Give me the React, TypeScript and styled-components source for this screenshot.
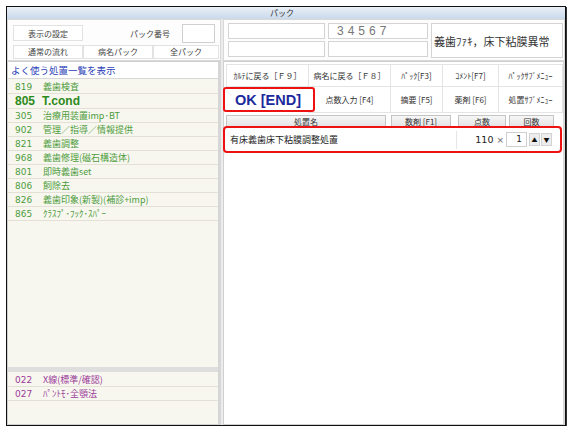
import React from "react";
import styled, { createGlobalStyle } from "styled-components";

const Global = createGlobalStyle`
  html, body { margin: 0; padding: 0; background: #ffffff; }
  body { font-family: "Noto Sans CJK JP", "Noto Sans", sans-serif; }
  * { box-sizing: border-box; }
`;

const Window = styled.div`
  margin: 6px 0 0 6px;
  width: 560px;
  height: 420px;
  border: 1px solid #111;
  box-shadow: 1px 1px 0 #333;
  background: #ececec;
  display: flex;
  flex-direction: column;
`;

const TitleBar = styled.div`
  height: 12px;
  background: linear-gradient(#e9eff7, #c9d9eb);
  font-size: 8px;
  line-height: 12px;
  color: #333;
  text-align: center;
  padding-right: 8px;
`;

const Row = styled.div<{ $h: number }>`
  display: flex;
  gap: 2px;
  height: ${(p) => p.$h}px;
`;

const Main = styled.div`
  flex: 1;
  display: flex;
  gap: 2px;
  min-height: 0;
`;

const LeftTop = styled.div`
  width: 214px;
  background: #fdfdfd;
  border: 1px solid #d8d8d8;
  padding: 3px 0 0 5px;
  display: flex;
  flex-direction: column;
  gap: 1px;
`;

const TopLine = styled.div<{ $h: number }>`
  display: flex;
  align-items: center;
  height: ${(p) => p.$h}px;
`;

const FlatButton = styled.div<{ $w: number; $h: number }>`
  width: ${(p) => p.$w}px;
  height: ${(p) => p.$h}px;
  background: #fff;
  border: 1px solid #e2e2e2;
  font-size: 8px;
  color: #444;
  display: flex;
  align-items: center;
  justify-content: center;
  white-space: nowrap;
`;

const Label = styled.span`
  font-size: 8px;
  color: #444;
  margin-left: 47px;
`;

const SmallInput = styled.div`
  width: 33px;
  height: 19px;
  margin-left: 12px;
  background: #fff;
  border: 1px solid #d0d0d0;
`;

const RightTop = styled.div`
  flex: 1;
  background: #fdfdfd;
  border: 1px solid #d8d8d8;
  padding: 3px 1px 2px 4px;
  display: flex;
  gap: 3px;
`;

const InputGrid = styled.div`
  display: grid;
  grid-template-columns: 97px 100px;
  grid-template-rows: 16px 16px;
  gap: 2px 3px;
`;

const Field = styled.div`
  background: #fff;
  border: 1px solid #d4d4d4;
  font-size: 12px;
  line-height: 14px;
  color: #777;
  padding-left: 8px;
  letter-spacing: 4px;
  font-family: "Liberation Sans", sans-serif;
`;

const Diagnosis = styled.div`
  flex: 1;
  background: #fff;
  border: 1px solid #d4d4d4;
  font-size: 11px;
  color: #333;
  display: flex;
  align-items: center;
  padding-left: 2px;
  white-space: nowrap;
`;

const LeftList = styled.div`
  width: 214px;
  display: flex;
  flex-direction: column;
  border: 1px solid #cfcfcf;
  border-right: 3px solid #d6d6d6;
  background: #f8f7ef;
`;

const ListHeader = styled.div`
  height: 17px;
  background: #fff;
  border-bottom: 1px solid #d8d8d8;
  color: #2c3fb8;
  font-size: 9.5px;
  line-height: 16px;
  padding-left: 3px;
`;

const ListArea = styled.div<{ $h?: number }>`
  ${(p) => (p.$h ? `height: ${p.$h}px;` : "flex: 1;")}
  padding-top: 1px;
  background: #f8f7ef;
`;

const Separator = styled.div`
  height: 5px;
  background: #dedede;
`;

const Item = styled.div<{ $color: string; $big?: boolean }>`
  display: flex;
  align-items: center;
  height: ${(p) => (p.$big ? 15 : 14)}px;
  border-bottom: 1px solid #e3e1d6;
  padding-left: 7px;
  color: ${(p) => p.$color};
  font-size: ${(p) => (p.$big ? 12 : 9)}px;
  font-weight: ${(p) => (p.$big ? 700 : 400)};
  white-space: nowrap;
`;

const Num = styled.span<{ $w: number; $big?: boolean }>`
  width: ${(p) => p.$w}px;
  font-family: ${(p) => (p.$big ? '"Liberation Sans"' : '"DejaVu Sans"')}, sans-serif;
  flex-shrink: 0;
`;

const BigName = styled.span`
  font-family: "Liberation Sans", sans-serif;
`;

const RightMain = styled.div`
  flex: 1;
  background: #fff;
  border: 1px solid #cfcfcf;
  border-right: 2px solid #d8d8d8;
  padding: 2px 0 0 2px;
  display: flex;
  flex-direction: column;
`;

const ButtonGrid = styled.div`
  display: grid;
  grid-template-columns: 82px 82px 52px 56px 64px;
  grid-template-rows: 22px 26px;
`;

const FKey = styled.div`
  border: 1px solid #e4e4e4;
  margin: 0 -1px -1px 0;
  background: #fff;
  font-size: 8px;
  color: #333;
  display: flex;
  align-items: center;
  justify-content: center;
  white-space: nowrap;
  overflow: hidden;
`;

const OkKey = styled.div`
  position: relative;
  z-index: 1;
  margin: 1px -7px 0 -3px;
  border: 2.5px solid #ee1111;
  border-radius: 3px;
  background: #fff;
  color: #1b2a9c;
  font-size: 14.5px;
  font-weight: 700;
  font-family: "Liberation Sans", sans-serif;
  display: flex;
  align-items: center;
  justify-content: center;
  white-space: nowrap;
  padding-right: 2px;
`;

const HeaderRow = styled.div`
  display: flex;
  margin-top: 3px;
  height: 12px;
  overflow: hidden;
`;

const ColHead = styled.div<{ $w: number; $ml: number }>`
  width: ${(p) => p.$w}px;
  margin-left: ${(p) => p.$ml}px;
  background: linear-gradient(#f7f7f7, #e2e2e2);
  border: 1px solid #c4c4c4;
  border-bottom: none;
  font-size: 8px;
  line-height: 11px;
  color: #333;
  text-align: center;
  white-space: nowrap;
`;

const SelectedRow = styled.div`
  margin: -1px 1px 0 -3px;
  height: 27px;
  border: 2.5px solid #ee1111;
  border-radius: 4px;
  display: flex;
  align-items: center;
  padding-left: 5px;
  position: relative;
  z-index: 1;
  background: #fff;
`;

const RowName = styled.span`
  flex: 1;
  font-size: 9px;
  color: #222;
  white-space: nowrap;
`;

const Points = styled.div`
  width: 50px;
  height: 18px;
  border-left: 1px solid #e6e6e6;
  font-size: 9.5px;
  color: #222;
  display: flex;
  align-items: center;
  justify-content: flex-end;
  padding-right: 2px;
  font-family: "DejaVu Sans", sans-serif;
`;

const Times = styled.span`
  color: #666;
  font-size: 9px;
  margin-left: 3px;
`;

const Count = styled.div`
  width: 21px;
  height: 15px;
  border: 1px solid #cfcfcf;
  font-size: 9px;
  text-align: right;
  padding-right: 4px;
  line-height: 13px;
  color: #222;
  font-family: "DejaVu Sans", sans-serif;
`;

const Spin = styled.div`
  width: 11px;
  height: 13px;
  margin-left: 1px;
  background: #ededed;
  border: 1px solid #d2d2d2;
  font-size: 6px;
  color: #111;
  display: flex;
  align-items: center;
  justify-content: center;
`;

const SpinGroup = styled.div`
  display: flex;
  align-items: center;
  margin-right: 8px;
  margin-left: 1px;
`;

const list1 = [
  { n: "819", t: "義歯検査" },
  { n: "805", t: "T.cond", big: true },
  { n: "305", t: "治療用装置imp･BT" },
  { n: "902", t: "管理／指導／情報提供" },
  { n: "821", t: "義歯調整" },
  { n: "968", t: "義歯修理(磁石構造体)" },
  { n: "801", t: "即時義歯set" },
  { n: "806", t: "飼除去" },
  { n: "826", t: "義歯印象(新製)(補診+imp)" },
  { n: "865", t: "ｸﾗｽﾌﾟ･ﾌｯｸ･ｽﾊﾟｰ" },
];

const list2 = [
  { n: "022", t: "X線(標準/確認)" },
  { n: "027", t: "ﾊﾟﾝﾄﾓ･全顎法" },
];

export default function App() {
  return (
    <>
      <Global />
      <Window>
        <TitleBar>パック</TitleBar>
        <Row $h={42}>
          <LeftTop>
            <TopLine $h={20}>
              <FlatButton $w={70} $h={16}>表示の設定</FlatButton>
              <Label>パック番号</Label>
              <SmallInput />
            </TopLine>
            <TopLine $h={15}>
              <FlatButton $w={70} $h={14}>通常の流れ</FlatButton>
              <FlatButton $w={70} $h={14}>病名パック</FlatButton>
              <FlatButton $w={66} $h={14}>全パック</FlatButton>
            </TopLine>
          </LeftTop>
          <RightTop>
            <InputGrid>
              <Field />
              <Field>34567</Field>
              <Field />
              <Field />
            </InputGrid>
            <Diagnosis>義歯ﾌｧｷ，床下粘膜異常</Diagnosis>
          </RightTop>
        </Row>
        <Main>
          <LeftList>
            <ListHeader>よく使う処置一覧を表示</ListHeader>
            <ListArea $h={288}>
              {list1.map((it) =>
                it.big ? (
                  <Item key={it.n} $color="#2c8a1c" $big>
                    <Num $w={27} $big>{it.n}</Num>
                    <BigName>{it.t}</BigName>
                  </Item>
                ) : (
                  <Item key={it.n} $color="#4d9c3d">
                    <Num $w={28}>{it.n}</Num>
                    {it.t}
                  </Item>
                )
              )}
            </ListArea>
            <Separator />
            <ListArea>
              {list2.map((it) => (
                <Item key={it.n} $color="#9a3a9a">
                  <Num $w={28}>{it.n}</Num>
                  {it.t}
                </Item>
              ))}
            </ListArea>
          </LeftList>
          <RightMain>
            <ButtonGrid>
              <FKey>ｶﾙﾃに戻る［Ｆ９］</FKey>
              <FKey>病名に戻る［Ｆ８］</FKey>
              <FKey>ﾊﾟｯｸ[F3]</FKey>
              <FKey>ｺﾒﾝﾄ[F7]</FKey>
              <FKey>ﾊﾟｯｸｻﾌﾞﾒﾆｭｰ</FKey>
              <OkKey>OK [END]</OkKey>
              <FKey>点数入力 [F4]</FKey>
              <FKey>摘要 [F5]</FKey>
              <FKey>薬剤 [F6]</FKey>
              <FKey>処置ｻﾌﾞﾒﾆｭｰ</FKey>
            </ButtonGrid>
            <HeaderRow>
              <ColHead $w={160} $ml={0}>処置名</ColHead>
              <ColHead $w={60} $ml={5}>数剤 [F1]</ColHead>
              <ColHead $w={48} $ml={7}>点数</ColHead>
              <ColHead $w={45} $ml={3}>回数</ColHead>
            </HeaderRow>
            <SelectedRow>
              <RowName>有床義歯床下粘膜調整処置</RowName>
              <Points>
                110<Times>×</Times>
              </Points>
              <Count>1</Count>
              <SpinGroup>
                <Spin>▲</Spin>
                <Spin>▼</Spin>
              </SpinGroup>
            </SelectedRow>
          </RightMain>
        </Main>
      </Window>
    </>
  );
}
